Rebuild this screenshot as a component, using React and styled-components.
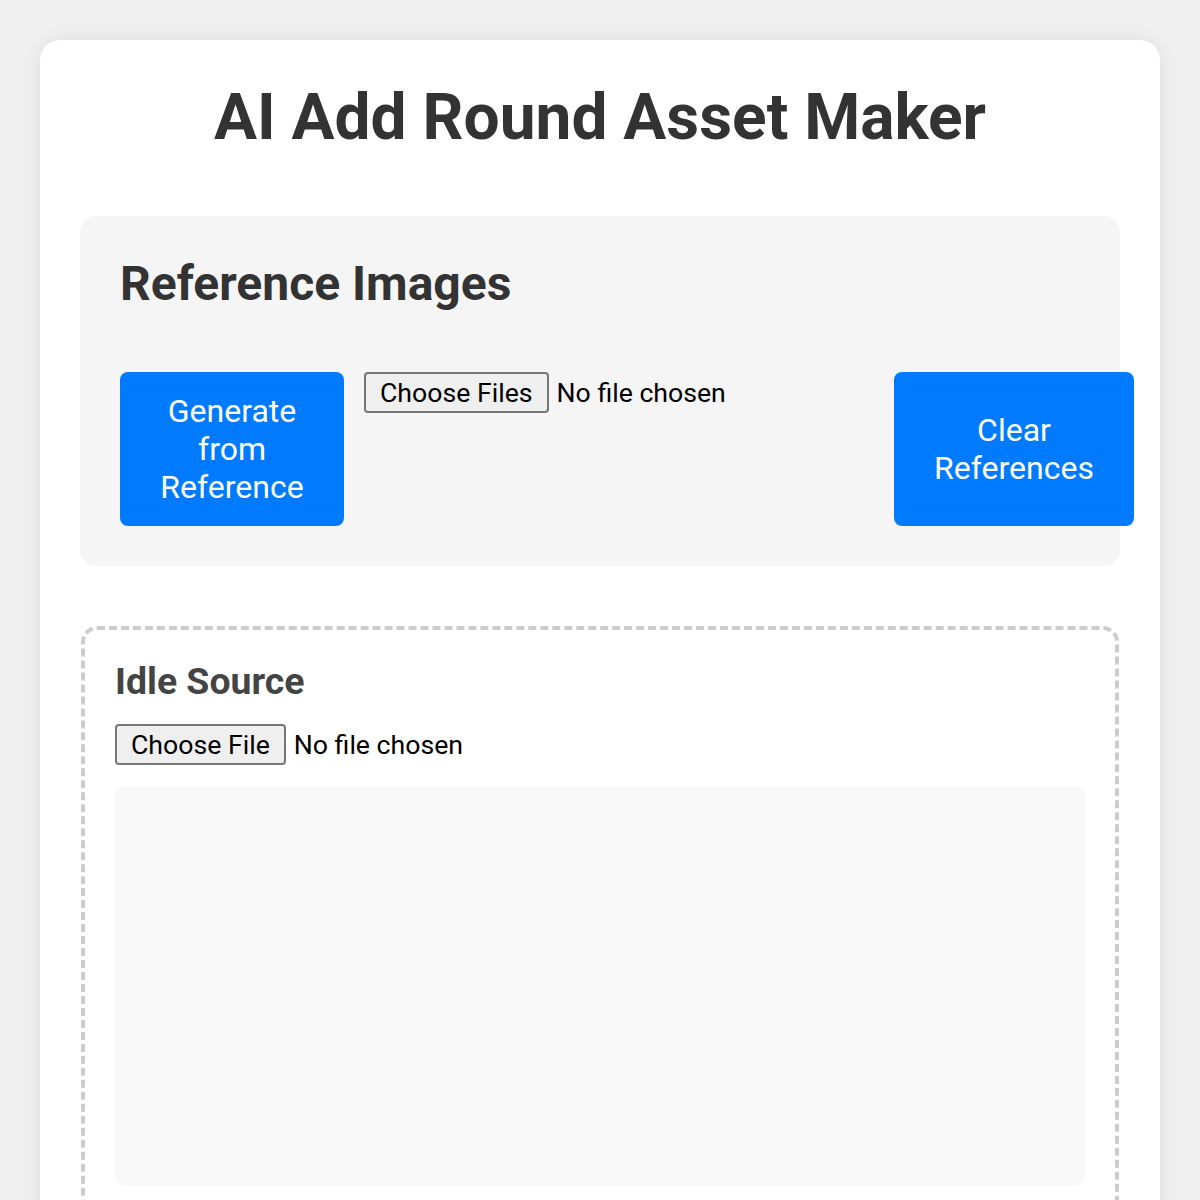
import React from "react";
import styled, { createGlobalStyle } from "styled-components";

const GlobalStyle = createGlobalStyle`
  * { box-sizing: border-box; }
  html, body {
    margin: 0;
    background: #f0f0f0;
  }
  body {
    padding: 40px;
    font-family: Roboto, "Liberation Sans", Arial, sans-serif;
    color: #333;
  }
`;

const Card = styled.main`
  max-width: 1120px;
  margin: 0 auto;
  background: #fff;
  border-radius: 20px;
  box-shadow: 0 0 20px rgba(0, 0, 0, 0.08);
  padding: 40px;
  min-height: 1300px;
`;

const Title = styled.h1`
  margin: 0 0 61px;
  font-size: 64px;
  line-height: 75px;
  font-weight: 700;
  text-align: center;
  color: #333;
`;

const Panel = styled.section`
  background: #f5f5f5;
  border-radius: 16px;
  padding: 40px;
  margin-bottom: 60px;
`;

const PanelHeading = styled.h2`
  margin: 0 0 60px;
  font-size: 48px;
  line-height: 56px;
  font-weight: 700;
  color: #333;
`;

const ActionRow = styled.div`
  display: flex;
  gap: 20px;
  align-items: stretch;
`;

const PrimaryButton = styled.button`
  flex: 0 0 ${(p) => p.$width}px;
  width: ${(p) => p.$width}px;
  padding: 20px 30px;
  border: none;
  border-radius: 8px;
  background: #007bff;
  color: #fff;
  font-family: Roboto, "Liberation Sans", Arial, sans-serif;
  font-size: 32px;
  line-height: 38px;
  text-align: center;
  cursor: pointer;
`;

const FileInput = styled.input`
  align-self: flex-start;
  flex: 0 0 ${(p) => p.$width}px;
  width: ${(p) => p.$width}px;
  font-family: Roboto, "Liberation Sans", Arial, sans-serif;
  font-size: 26.67px;
  color: #000;

  &::file-selector-button {
    font: inherit;
    color: #000;
    background: #efefef;
    border: 2px solid #767676;
    border-radius: 4px;
    padding: 2px 14px;
    margin-right: 8px;
    height: 41px;
  }
`;

const DropZone = styled.section`
  margin: 0 1px;
  border: 4px dashed #ccc;
  border-radius: 16px;
  padding: 29px 30px 30px;
`;

const ZoneHeading = styled.h3`
  margin: 0 0 21px;
  font-size: 37.4px;
  line-height: 44px;
  font-weight: 700;
  color: #444;
`;

const Preview = styled.div`
  margin-top: 21px;
  height: 400px;
  background: #f8f8f8;
  border-radius: 10px;
`;

export default function App() {
  return (
    <>
      <GlobalStyle />
      <Card>
        <Title>AI Add Round Asset Maker</Title>
        <Panel>
          <PanelHeading>Reference Images</PanelHeading>
          <ActionRow>
            <PrimaryButton $width={224}>Generate from Reference</PrimaryButton>
            <FileInput type="file" multiple accept="image/*" $width={510} />
            <PrimaryButton $width={240}>Clear References</PrimaryButton>
          </ActionRow>
        </Panel>
        <DropZone>
          <ZoneHeading>Idle Source</ZoneHeading>
          <FileInput type="file" accept="image/*" $width={500} />
          <Preview />
        </DropZone>
      </Card>
    </>
  );
}
